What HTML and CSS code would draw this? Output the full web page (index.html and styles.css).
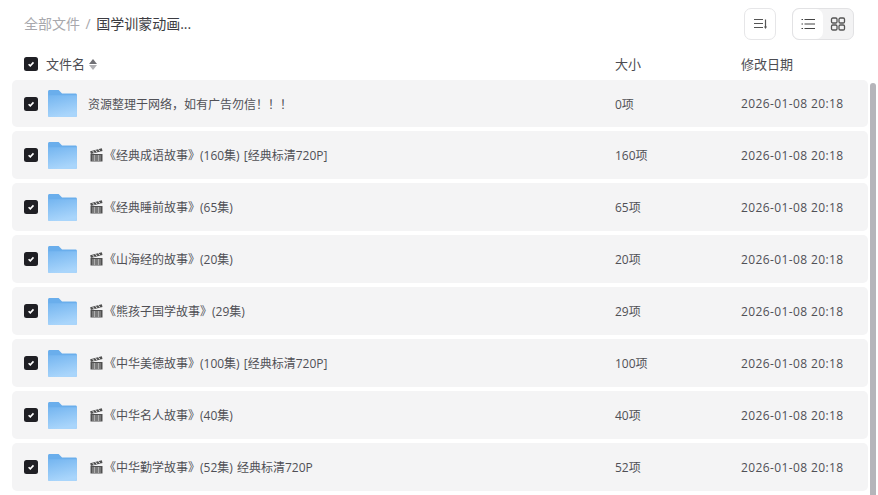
FILE: index.html
```html
<!DOCTYPE html>
<html lang="zh-CN">
<head>
<meta charset="UTF-8">
<title>国学训蒙动画</title>
<link rel="stylesheet" href="styles.css">
</head>
<body>
<svg class="defs" width="0" height="0">
<defs>
<linearGradient id="fold" x1="0" y1="0" x2="0.3" y2="1">
<stop offset="0" stop-color="#74b5f0"/>
<stop offset="1" stop-color="#a9d5fb"/>
</linearGradient>
<symbol id="folder" viewBox="0 0 30 28">
<path d="M0 1.500C0 .7.7 0 1.500 0h9.500l3.500 3.500H28.500c.8 0 1.500.7 1.500 1.500V26.500c0 .8-.7 1.500-1.500 1.500H1.500C.7 28 0 27.300 0 26.500z" fill="#6aaeec"/>
<path d="M0 5.500h30V26.500c0 .8-.7 1.500-1.500 1.500H1.500C.7 28 0 27.300 0 26.500z" fill="url(#fold)"/>
</symbol>
<symbol id="clap" viewBox="0 0 13 14">
<path d="M.5 6h12v7.500H.5z" fill="#505050"/>
<path d="M.2 3.300 11.800.2l.7 2.700L.9 6z" fill="#505050"/>
<path d="M2.600 2.900 4.300 5M5.500 2.100 7.200 4.200M8.400 1.300l1.700 2.100" stroke="#e4e4e4" stroke-width="1"/>
<path d="M2 8h9M2 10h9M2 12h9M4.500 7v6M8.500 7v6" stroke="#c4c4c4" stroke-width=".7"/>
</symbol>
<symbol id="check" viewBox="0 0 14 14">
<rect width="14" height="14" rx="2.500" fill="#1f1f24"/>
<path d="M4.600 7.200 6.300 8.900 9.500 5.400" fill="none" stroke="#fff" stroke-width="1.600"/>
</symbol>
</defs>
</svg>

<div class="top">
  <div class="crumbs">
    <span class="crumb-root">全部文件</span>
    <span class="crumb-sep">/</span>
    <span class="crumb-cur">国学训蒙动画...</span>
  </div>
  <div class="tools">
    <div class="btn">
      <svg width="16" height="16" viewBox="0 0 16 16"><path d="M2 3.500h9M2 7.500h9M2 11.500h9" stroke="#555" stroke-width="1.200"/><path d="M13.500 3.500v8" stroke="#555" stroke-width="1.200"/><path d="M12 10.500h3L13.500 13z" fill="#555"/></svg>
    </div>
    <div class="switch">
      <div class="sw-item sw-on">
        <svg width="16" height="16" viewBox="0 0 16 16"><path d="M4.500 3.500H15M4.500 8H15M4.500 12.500H15" stroke="#444" stroke-width="1.200"/><path d="M1.500 3.500h1.500M1.500 8h1.500M1.500 12.500h1.500" stroke="#444" stroke-width="1.200"/></svg>
      </div>
      <div class="sw-item">
        <svg width="16" height="16" viewBox="0 0 16 16" fill="none" stroke="#555" stroke-width="1.300"><rect x="1.500" y="2" width="5.500" height="5" rx="1.300"/><rect x="9" y="2" width="5.500" height="5" rx="1.300"/><rect x="1.500" y="9" width="5.500" height="5" rx="1.300"/><rect x="9" y="9" width="5.500" height="5" rx="1.300"/></svg>
      </div>
    </div>
  </div>
</div>

<div class="head">
  <div class="cell-name">
    <svg class="chk" width="14" height="14"><use href="#check"/></svg>
    <span class="head-name">文件名</span>
    <span class="sort"><i class="up"></i><i class="down"></i></span>
  </div>
  <div>大小</div>
  <div>修改日期</div>
</div>

<div class="list">
  <div class="row first">
    <div class="cell-name"><svg class="chk" width="14" height="14"><use href="#check"/></svg><svg class="fold" width="29" height="27"><use href="#folder"/></svg><span class="title">资源整理于网络，如有广告勿信！！！</span></div>
    <div>0项</div><div class="date">2026-01-08 20:18</div>
  </div>
  <div class="row">
    <div class="cell-name"><svg class="chk" width="14" height="14"><use href="#check"/></svg><svg class="fold" width="29" height="27"><use href="#folder"/></svg><svg class="clap" width="13" height="14"><use href="#clap"/></svg><span class="title">《经典成语故事》(160集) [经典标清720P]</span></div>
    <div>160项</div><div class="date">2026-01-08 20:18</div>
  </div>
  <div class="row">
    <div class="cell-name"><svg class="chk" width="14" height="14"><use href="#check"/></svg><svg class="fold" width="29" height="27"><use href="#folder"/></svg><svg class="clap" width="13" height="14"><use href="#clap"/></svg><span class="title">《经典睡前故事》(65集)</span></div>
    <div>65项</div><div class="date">2026-01-08 20:18</div>
  </div>
  <div class="row">
    <div class="cell-name"><svg class="chk" width="14" height="14"><use href="#check"/></svg><svg class="fold" width="29" height="27"><use href="#folder"/></svg><svg class="clap" width="13" height="14"><use href="#clap"/></svg><span class="title">《山海经的故事》(20集)</span></div>
    <div>20项</div><div class="date">2026-01-08 20:18</div>
  </div>
  <div class="row">
    <div class="cell-name"><svg class="chk" width="14" height="14"><use href="#check"/></svg><svg class="fold" width="29" height="27"><use href="#folder"/></svg><svg class="clap" width="13" height="14"><use href="#clap"/></svg><span class="title">《熊孩子国学故事》(29集)</span></div>
    <div>29项</div><div class="date">2026-01-08 20:18</div>
  </div>
  <div class="row">
    <div class="cell-name"><svg class="chk" width="14" height="14"><use href="#check"/></svg><svg class="fold" width="29" height="27"><use href="#folder"/></svg><svg class="clap" width="13" height="14"><use href="#clap"/></svg><span class="title">《中华美德故事》(100集) [经典标清720P]</span></div>
    <div>100项</div><div class="date">2026-01-08 20:18</div>
  </div>
  <div class="row">
    <div class="cell-name"><svg class="chk" width="14" height="14"><use href="#check"/></svg><svg class="fold" width="29" height="27"><use href="#folder"/></svg><svg class="clap" width="13" height="14"><use href="#clap"/></svg><span class="title">《中华名人故事》(40集)</span></div>
    <div>40项</div><div class="date">2026-01-08 20:18</div>
  </div>
  <div class="row">
    <div class="cell-name"><svg class="chk" width="14" height="14"><use href="#check"/></svg><svg class="fold" width="29" height="27"><use href="#folder"/></svg><svg class="clap" width="13" height="14"><use href="#clap"/></svg><span class="title">《中华勤学故事》(52集) 经典标清720P</span></div>
    <div>52项</div><div class="date">2026-01-08 20:18</div>
  </div>
</div>

<div class="thumb"></div>
</body>
</html>
```
FILE: styles.css
```css
html,body{
margin:0;
height:495px;
overflow:hidden;
background:#fff;
font-family:"Open Sans","Noto Sans CJK SC",sans-serif;
color:#505056;
font-size:12px;
}

.defs{
position:absolute;
}

.top{
display:flex;
justify-content:space-between;
align-items:center;
height:48px;
padding:0 24px;
}

.crumbs{
display:flex;
align-items:center;
font-size:14px;
padding-bottom:2px;
}

.crumb-root{
color:#a8a8ad;
}

.crumb-sep{
color:#a8a8ad;
margin:0 5.500px;
}

.crumb-cur{
color:#3c3c42;
}

.tools{
display:flex;
gap:16px;
}

.btn{
width:30px;
height:30px;
border:1px solid #e6e6e8;
border-radius:7px;
display:flex;
align-items:center;
justify-content:center;
}

.switch{
display:flex;
width:60px;
height:30px;
border:1px solid #e2e2e4;
border-radius:7px;
background:#f3f3f4;
overflow:hidden;
}

.sw-item{
flex:1;
display:flex;
align-items:center;
justify-content:center;
}

.sw-on{
background:#fff;
border-radius:7px;
}

.head,.row{
display:grid;
grid-template-columns:603px 126px 1fr;
align-items:center;
}

.head{
height:32px;
padding:0 12px;
font-size:13px;
color:#4c4c52;
}

.head>div:nth-child(n+2){
padding-bottom:2px;
}

.head>div:first-child,.row>div:first-child{
padding-left:12px;
}

.cell-name{
display:flex;
align-items:center;
}

.head-name{
margin-left:8px;
padding-bottom:2px;
}

.sort{
display:inline-flex;
flex-direction:column;
gap:1px;
margin-left:4px;
}

.sort i{
display:block;
width:0;
height:0;
border-left:4px solid transparent;
border-right:4px solid transparent;
}

.sort .up{
border-bottom:5px solid #707075;
}

.sort .down{
border-top:5px solid #b0b0b4;
}

.list{
margin:0 10px 0 12px;
}

.row{
height:48px;
margin-bottom:4px;
background:#f4f4f5;
border-radius:5px;
font-size:12px;
}

.row.first{
height:47px;
margin-bottom:4px;
}

.date{
letter-spacing:.38px;
}

.fold{
margin-left:9.500px;
flex:none;
}

.clap{
margin-left:13px;
flex:none;
}

.title{
margin-left:11.500px;
white-space:nowrap;
word-spacing:1px;
}

.clap+.title{
margin-left:1.500px;
}

.thumb{
position:absolute;
left:870px;
top:83px;
bottom:0;
width:6px;
background:#b5b5ba;
border-radius:3px 3px 0 0;
}
```
